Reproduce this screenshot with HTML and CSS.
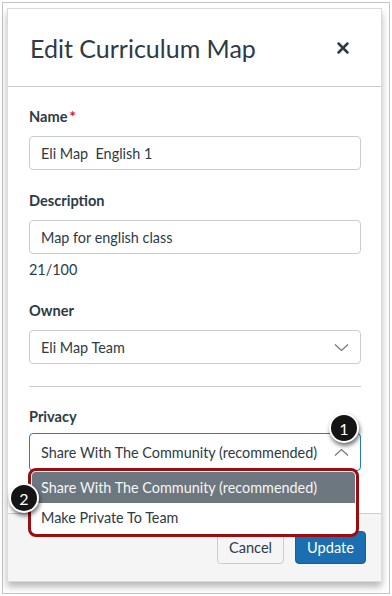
FILE: index.html
```html
<!DOCTYPE html>
<html lang="en">
<head>
    <meta charset="UTF-8">
    <meta name="viewport" content="width=device-width, initial-scale=1.0">
    <title>Edit Curriculum Map</title>
    <link rel="stylesheet" href="styles.css">
</head>
<body>
    <div class="frame">
        <div class="modal">
            <!-- Header -->
            <div class="modal-header">
                <h2>Edit Curriculum Map</h2>
                <button class="close-btn" aria-label="Close">
                    <svg width="14" height="14" viewBox="0 0 14 14"><path d="M2.5 2.5 L11.5 11.5 M11.5 2.5 L2.5 11.5" stroke="#2d3b45" stroke-width="2.5" stroke-linecap="round"/></svg>
                </button>
            </div>

            <!-- Form -->
            <div class="modal-body">
                <div class="field">
                    <label>Name<span class="req">*</span></label>
                    <input class="text-input" type="text" value="Eli Map  English 1" readonly>
                </div>
                <div class="field">
                    <label>Description</label>
                    <input class="text-input" type="text" value="Map for english class" readonly>
                    <div class="counter">21/100</div>
                </div>
                <div class="field">
                    <label>Owner</label>
                    <div class="select">
                        <span>Eli Map Team</span>
                        <svg width="15" height="9" viewBox="0 0 15 9"><path d="M1 1.5 L7.5 7.5 L14 1.5" fill="none" stroke="#6b7780" stroke-width="1.2"/></svg>
                    </div>
                </div>

                <hr class="divider">

                <div class="field last">
                    <label>Privacy</label>
                    <div class="privacy-wrap">
                        <div class="select open">
                            <span>Share With The Community (recommended)</span>
                            <svg width="15" height="9" viewBox="0 0 15 9"><path d="M1 7.5 L7.5 1.5 L14 7.5" fill="none" stroke="#6b7780" stroke-width="1.2"/></svg>
                        </div>
                        <span class="badge badge-one">1</span>
                        <ul class="menu">
                            <li class="menu-item active">Share With The Community (recommended)</li>
                            <li class="menu-item">Make Private To Team</li>
                        </ul>
                        <span class="badge badge-two">2</span>
                    </div>
                </div>
            </div>

            <!-- Footer -->
            <div class="modal-footer">
                <button class="btn btn-cancel">Cancel</button>
                <button class="btn btn-primary">Update</button>
            </div>
        </div>
    </div>
</body>
</html>
```

FILE: styles.css
```css
* { box-sizing: border-box; }
body { margin: 0; background: #fff; font-family: Lato, "Open Sans", Arial, sans-serif; color: #2d3b45; }
.frame { margin: 2px; width: 388px; height: 592px; border: 1px solid #c4c4c4; padding: 5px 6px 0 4px; }
.modal { width: 375px; border: 1px solid #d9dcde; background: #fff; box-shadow: 0 5px 7px rgba(0, 0, 0, 0.28); }

.modal-header { height: 78px; display: flex; align-items: center; justify-content: space-between; padding: 0 31px 0 22px; border-bottom: 1px solid #c7cdd1; }
.modal-header h2 { margin: 0; font-size: 25px; font-weight: 400; color: #2d3b45; }
.close-btn { border: none; background: none; padding: 0; display: flex; cursor: pointer; }

.modal-body { padding: 20px 20px 42px 21px; }
.field { margin-bottom: 21px; }
.field.last { margin-bottom: 0; }
.field label { display: block; font-size: 14.6px; font-weight: 700; line-height: 20px; margin-bottom: 9px; }
.req { color: #e0061f; margin-left: 2px; }
.text-input { display: block; width: 100%; height: 34px; border: 1px solid #c7cdd1; border-radius: 4px; padding: 0 11px; font-family: inherit; font-size: 14.4px; color: #2d3b45; background: #fff; outline: none; white-space: pre; }
.counter { margin-top: 6px; font-size: 14.4px; line-height: 20px; }

.select { height: 34px; border: 1px solid #c7cdd1; border-radius: 4px; padding: 0 11px 0 11px; display: flex; align-items: center; justify-content: space-between; font-size: 14.4px; }
.select.open { height: 38px; border-color: #2b7bc0; }
.divider { border: none; border-top: 1px solid #c7cdd1; margin: 22px 0 20px; }

.field.last label { margin-bottom: 6px; }
.privacy-wrap { position: relative; }
.menu { position: absolute; top: 35px; left: -1px; width: 331px; margin: 0; padding: 1px; list-style: none; background: #fff; border: 3px solid #9b0d10; border-radius: 8px; z-index: 2; }
.menu-item { height: 30px; line-height: 30px; padding-left: 9px; font-size: 14.4px; color: #2d3b45; }
.menu-item.active { height: 31px; line-height: 31px; background: #6c7780; color: #f5f5f5; border-radius: 4px 4px 0 0; }

.badge { position: absolute; width: 30px; height: 30px; border-radius: 50%; background: #141414; border: 2px solid #fff; color: #fff; font-size: 16px; font-weight: 400; display: flex; align-items: center; justify-content: center; box-shadow: 1px 3px 4px rgba(0, 0, 0, 0.55); z-index: 3; }
.badge-one { left: 300px; top: -20px; }
.badge-two { left: -20px; top: 50px; }

.modal-footer { background: #f5f5f5; border-top: 1px solid #c7cdd1; padding: 17px 15px 17px 0; display: flex; justify-content: flex-end; gap: 11px; }
.btn { height: 33px; padding: 0 11px; border-radius: 4px; font-family: inherit; font-size: 14.6px; cursor: pointer; }
.btn-cancel { background: #f5f5f5; border: 1px solid #c7cdd1; color: #2d3b45; }
.btn-primary { background: #1b6fb0; border: 1px solid #175f98; color: #fff; }
```
